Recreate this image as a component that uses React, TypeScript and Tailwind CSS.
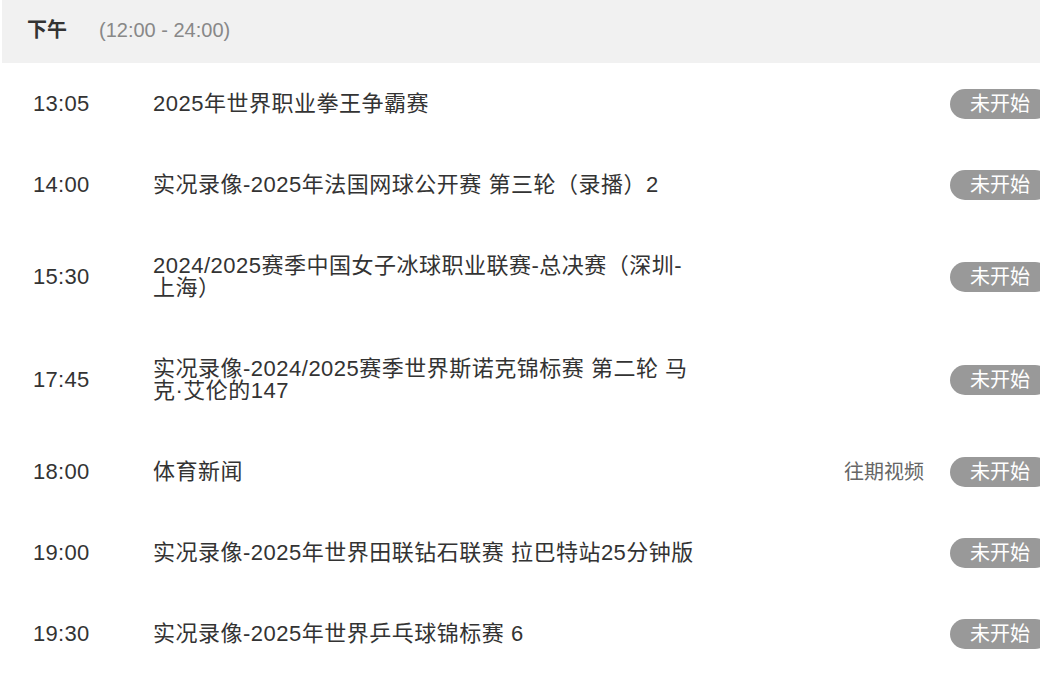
type Program = {
  time: string;
  title: string;
  replay?: boolean;
};

const programs: Program[] = [
  { time: "13:05", title: "2025年世界职业拳王争霸赛" },
  { time: "14:00", title: "实况录像-2025年法国网球公开赛 第三轮（录播）2" },
  { time: "15:30", title: "2024/2025赛季中国女子冰球职业联赛-总决赛（深圳-上海）" },
  { time: "17:45", title: "实况录像-2024/2025赛季世界斯诺克锦标赛 第二轮 马克·艾伦的147" },
  { time: "18:00", title: "体育新闻", replay: true },
  { time: "19:00", title: "实况录像-2025年世界田联钻石联赛 拉巴特站25分钟版" },
  { time: "19:30", title: "实况录像-2025年世界乒乓球锦标赛 6" },
];

const App: React.FC = () => {
  return (
    <div
      className="w-[1040px] h-[678px] overflow-hidden bg-white text-[#333]"
      style={{ fontFamily: '"Liberation Sans", "Noto Sans CJK SC", sans-serif' }}
    >
      <div className="ml-[2px] h-[63px] pb-[3px] bg-[#f1f1f1] flex items-center pl-[25px] text-[20px]">
        <span className="font-bold text-[#333]">下午</span>
        <span className="ml-[32px] text-[#888]">(12:00 - 24:00)</span>
      </div>
      <ul>
        {programs.map((p) => (
          <li key={p.time} className="flex items-center py-[29.5px]">
            <span className="w-[153px] shrink-0 pl-[33px] text-[22px] leading-[22px] tracking-[0.3px]">{p.time}</span>
            <span className="w-[542px] shrink-0 text-[22px] leading-[22px] tracking-[0.5px]">{p.title}</span>
            <div className="flex-1 h-[22px] flex items-center justify-end">
              {p.replay && <span className="text-[20px] text-[#666] mr-[26px]">往期视频</span>}
              <span className="w-[100px] h-[30px] shrink-0 -mr-[10px] rounded-full bg-[#999] text-white text-[20px] leading-[30px] text-center">
                未开始
              </span>
            </div>
          </li>
        ))}
      </ul>
    </div>
  );
};

export default App;
